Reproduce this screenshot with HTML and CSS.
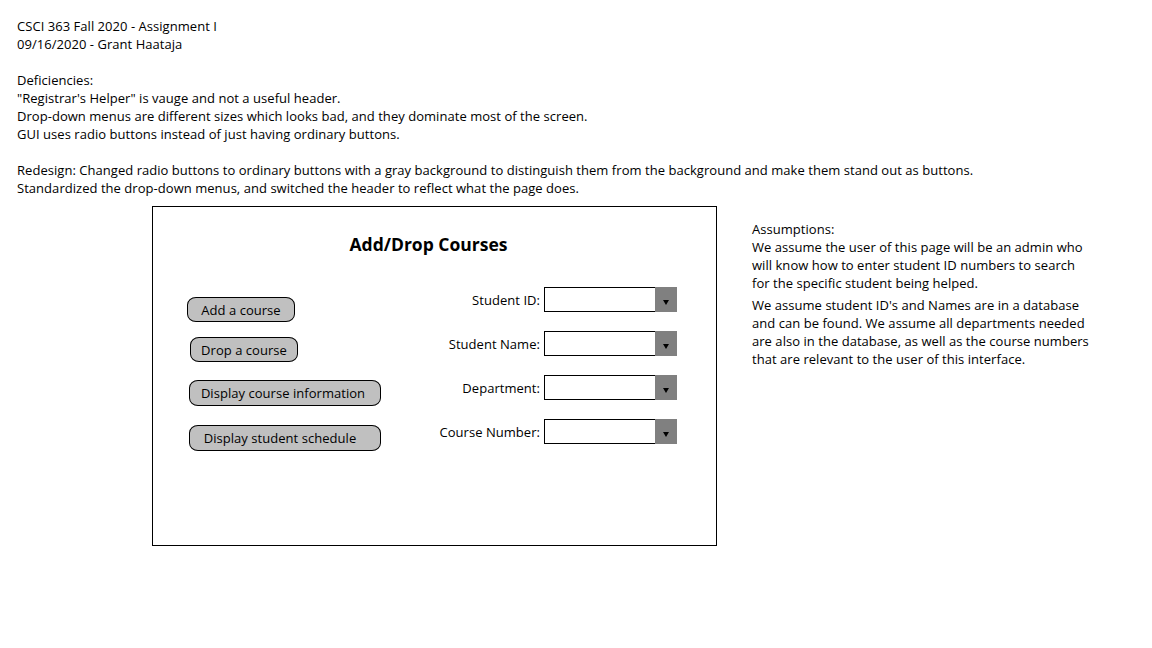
FILE: index.html
```html
<!DOCTYPE html>
<html>
<head>
<meta charset="utf-8">
<link rel="stylesheet" href="styles.css">
<title>Assignment I</title>
</head>
<body>
<div class="page">
  <div class="notes">
    <p>CSCI 363 Fall 2020 - Assignment I<br>09/16/2020 - Grant Haataja</p>
    <p>Deficiencies:<br>"Registrar's Helper" is vauge and not a useful header.<br>Drop-down menus are different sizes which looks bad, and they dominate most of the screen.<br>GUI uses radio buttons instead of just having ordinary buttons.</p>
    <p>Redesign: Changed radio buttons to ordinary buttons with a gray background to distinguish them from the background and make them stand out as buttons.<br>Standardized the drop-down menus, and switched the header to reflect what the page does.</p>
  </div>
  <div class="row">
    <div class="frame">
      <h1 class="title">Add/Drop Courses</h1>
      <div class="body">
        <div class="buttons">
          <div class="btn btn-add">Add a course</div>
          <div class="btn btn-drop">Drop a course</div>
          <div class="btn btn-info">Display course information</div>
          <div class="btn btn-sched">Display student schedule</div>
        </div>
        <div class="form">
          <div class="label">Student ID:</div>
          <div class="select"><span class="arrow"></span></div>
          <div class="label">Student Name:</div>
          <div class="select"><span class="arrow"></span></div>
          <div class="label">Department:</div>
          <div class="select"><span class="arrow"></span></div>
          <div class="label">Course Number:</div>
          <div class="select"><span class="arrow"></span></div>
        </div>
      </div>
    </div>
    <div class="aside">
      <p>Assumptions:<br>We assume the user of this page will be an admin who<br>will know how to enter student ID numbers to search<br>for the specific student being helped.</p>
      <p>We assume student ID's and Names are in a database<br>and can be found. We assume all departments needed<br>are also in the database, as well as the course numbers<br>that are relevant to the user of this interface.</p>
    </div>
  </div>
</div>
</body>
</html>
```

FILE: styles.css
```css
html, body {
  margin: 0;
  padding: 0;
  background: #ffffff;
}
body {
  font-family: "Open Sans", "Noto Sans", "Liberation Sans", sans-serif;
  font-size: 13px;
  letter-spacing: 0.04px;
  line-height: 18px;
  color: #000000;
}
.page {
  padding: 17px 0 0 17px;
}
.notes p {
  margin: 0 0 18px 0;
  white-space: nowrap;
}
.notes p:last-child {
  margin-bottom: 0;
}
.row {
  display: flex;
  align-items: flex-start;
  margin-top: 9px;
}
.frame {
  margin-left: 135px;
  width: 563px;
  height: 338px;
  border: 1px solid #000000;
}
.title {
  margin: 25px 0 0 0;
  text-align: center;
  font-size: 17.5px;
  line-height: 24px;
  font-weight: bold;
  letter-spacing: 0;
  padding-right: 12px;
}
.body {
  display: flex;
  align-items: flex-start;
  margin-top: 31px;
}
.buttons {
  display: flex;
  flex-direction: column;
  align-items: flex-start;
  margin-left: 34px;
  margin-top: 10px;
  width: 194px;
}
.btn {
  box-sizing: border-box;
  height: 25px;
  border: 1px solid #000000;
  border-radius: 9px / 8px;
  background: #c0c0c0;
  display: flex;
  align-items: center;
  justify-content: center;
  white-space: nowrap;
}
.btn-add { width: 108px; }
.btn-drop { width: 108px; margin-top: 15px; margin-left: 3px; }
.btn-info { width: 192px; height: 26px; margin-top: 18px; margin-left: 2px; padding-right: 4px; }
.btn-sched { width: 192px; height: 26px; margin-top: 19px; margin-left: 2px; padding-right: 10px; }
.form {
  display: grid;
  grid-template-columns: 119px 133px;
  column-gap: 4px;
  row-gap: 19px;
  margin-left: 40px;
  align-items: center;
}
.label {
  justify-self: end;
  white-space: nowrap;
}
.select {
  position: relative;
  box-sizing: border-box;
  height: 25px;
  border: 1px solid #000000;
  background: #ffffff;
}
.arrow {
  position: absolute;
  top: -1px;
  right: -1px;
  bottom: -1px;
  width: 22px;
  background: #808080;
}
.arrow::after {
  content: "";
  position: absolute;
  left: 8px;
  top: 13px;
  border-left: 3.5px solid transparent;
  border-right: 3.5px solid transparent;
  border-top: 5px solid #000000;
}
.aside {
  margin-left: 35px;
  margin-top: 14px;
  white-space: nowrap;
}
.aside p {
  margin: 0 0 4px 0;
}
```
